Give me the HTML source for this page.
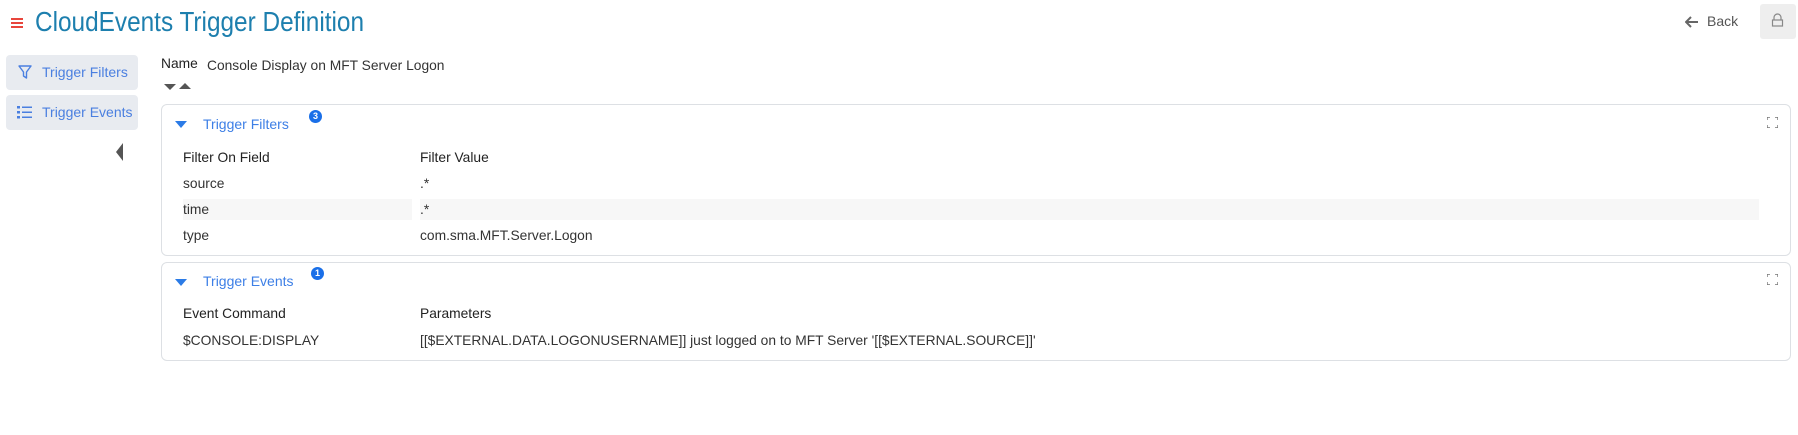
<!DOCTYPE html>
<html><head><meta charset="utf-8"><style>
body{margin:0;width:1798px;height:435px;background:#fff;font-family:"Liberation Sans",sans-serif;position:relative;overflow:hidden;color:#333}
.a{position:absolute;white-space:nowrap}
.btn{position:absolute;left:6px;width:132px;height:35px;background:#e8ebf0;border-radius:4px;color:#4a7fe0;font-size:14px}
.panel{position:absolute;left:161px;width:1628px;border:1px solid #dde0e4;border-radius:6px}
.t{font-size:13.8px;color:#333}
.ph{font-size:14px;color:#3d7fe6}
.badge{position:absolute;width:13px;height:13px;border-radius:50%;background:#1a6fe8;color:#fff;font-size:9px;font-weight:bold;text-align:center;line-height:13px}
.tri{position:absolute;width:0;height:0;border-left:6px solid transparent;border-right:6px solid transparent;border-top:7px solid #2b7be6}
</style></head><body>
<svg class="a" style="left:11px;top:17px" width="12" height="12"><rect y="1" width="12" height="2" fill="#e8453c"/><rect y="5" width="12" height="2" fill="#e8453c"/><rect y="9" width="12" height="2" fill="#e8453c"/></svg>
<div class="a" style="left:35px;top:6px;font-size:28px;color:#1d7fae;transform:scaleX(0.87);transform-origin:left">CloudEvents Trigger Definition</div>
<svg class="a" style="left:1685px;top:16px" width="14" height="12"><path d="M13 6H2M6 1L1 6l5 5" stroke="#666" stroke-width="2" fill="none"/></svg>
<div class="a" style="left:1707px;top:13px;font-size:14px;color:#555">Back</div>
<div class="a" style="left:1760px;top:4px;width:36px;height:35px;background:#eeeeee;border-radius:3px"></div>
<svg class="a" style="left:1771px;top:13px" width="13" height="14"><path d="M3 7V4.5a3.5 3.5 0 0 1 7 0V7" stroke="#888" fill="none" stroke-width="1.2"/><rect x="1.5" y="7" width="10" height="6" stroke="#888" fill="none" stroke-width="1.2"/></svg>

<div class="btn" style="top:55px"><svg class="a" style="left:12px;top:10px" width="14" height="15"><path d="M1 1h12L8.5 7v6l-3-2V7z" stroke="#4a7fe0" fill="none" stroke-width="1.4" stroke-linejoin="round"/></svg><span class="a" style="left:36px;top:9px">Trigger Filters</span></div>
<div class="btn" style="top:95px"><svg class="a" style="left:11px;top:11px" width="16" height="13"><g fill="#4a7fe0"><rect x="0" y="0" width="3" height="2.5"/><rect x="0" y="5" width="3" height="2.5"/><rect x="0" y="10" width="3" height="2.5"/><rect x="5" y="0.5" width="10" height="1.5"/><rect x="5" y="5.5" width="10" height="1.5"/><rect x="5" y="10.5" width="10" height="1.5"/></g></svg><span class="a" style="left:36px;top:9px">Trigger Events</span></div>
<div class="a" style="left:116px;top:143px;width:0;height:0;border-top:9px solid transparent;border-bottom:9px solid transparent;border-right:7px solid #555"></div>

<div class="a t" style="left:161px;top:56px;color:#222">Name</div>
<div class="a t" style="left:207px;top:58px">Console Display on MFT Server Logon</div>
<div class="a" style="left:164px;top:84px;border-left:6px solid transparent;border-right:6px solid transparent;border-top:6px solid #555"></div>
<div class="a" style="left:179px;top:83px;border-left:6px solid transparent;border-right:6px solid transparent;border-bottom:6px solid #555"></div>

<div class="panel" style="top:104px;height:150px">
 <div class="tri" style="left:13px;top:16px"></div>
 <div class="a ph" style="left:41px;top:11px">Trigger Filters</div>
 <div class="badge" style="left:147px;top:5px">3</div>
 <svg class="a" style="left:1605px;top:12px" width="11" height="11"><path d="M0 3V0h3M8 0h3v3M11 8v3H8M3 11H0V8" stroke="#777" fill="none" stroke-width="1.4"/></svg>
 <div class="a t" style="left:21px;top:45px;color:#222">Filter On Field</div>
 <div class="a t" style="left:258px;top:45px;color:#222">Filter Value</div>
 <div class="a t" style="left:21px;top:71px">source</div>
 <div class="a t" style="left:258px;top:71px">.*</div>
 <div class="a" style="left:21px;top:94px;width:229px;height:21px;background:#f7f7f7"></div>
 <div class="a" style="left:258px;top:94px;width:1339px;height:21px;background:#f7f7f7"></div>
 <div class="a t" style="left:21px;top:97px">time</div>
 <div class="a t" style="left:258px;top:97px">.*</div>
 <div class="a t" style="left:21px;top:123px">type</div>
 <div class="a t" style="left:258px;top:123px">com.sma.MFT.Server.Logon</div>
</div>

<div class="panel" style="top:262px;height:97px">
 <div class="tri" style="left:13px;top:16px"></div>
 <div class="a ph" style="left:41px;top:10px">Trigger Events</div>
 <div class="badge" style="left:149px;top:4px">1</div>
 <svg class="a" style="left:1605px;top:11px" width="11" height="11"><path d="M0 3V0h3M8 0h3v3M11 8v3H8M3 11H0V8" stroke="#777" fill="none" stroke-width="1.4"/></svg>
 <div class="a t" style="left:21px;top:43px;color:#222">Event Command</div>
 <div class="a t" style="left:258px;top:43px;color:#222">Parameters</div>
 <div class="a t" style="left:21px;top:70px">$CONSOLE:DISPLAY</div>
 <div class="a t" style="left:258px;top:70px">[[$EXTERNAL.DATA.LOGONUSERNAME]] just logged on to MFT Server '[[$EXTERNAL.SOURCE]]'</div>
</div>
</body></html>
